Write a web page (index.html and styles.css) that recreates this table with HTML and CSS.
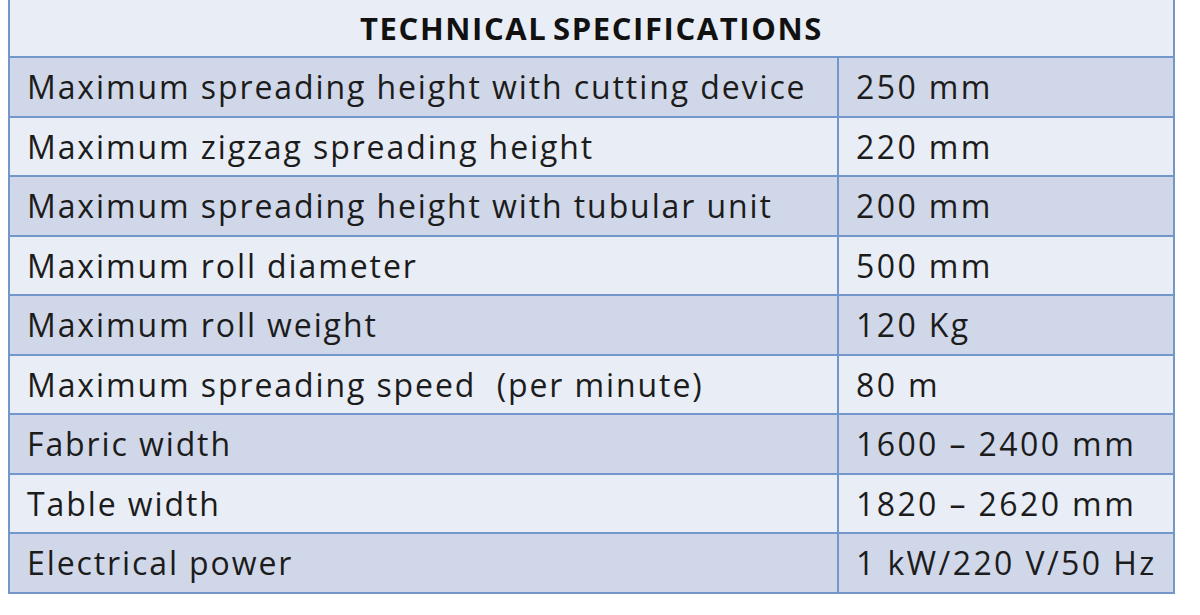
FILE: index.html
```html
<!DOCTYPE html>
<html>
<head>
<meta charset="utf-8">
<link rel="stylesheet" href="styles.css">
</head>
<body>
<table class="spec">
  <colgroup><col class="ck"><col class="cv"></colgroup>
  <tr class="head"><th colspan="2">TECHNICAL SPECIFICATIONS</th></tr>
  <tr class="dark"><td>Maximum spreading height with cutting device</td><td>250 mm</td></tr>
  <tr class="light"><td>Maximum zigzag spreading height</td><td>220 mm</td></tr>
  <tr class="dark"><td>Maximum spreading height with tubular unit</td><td>200 mm</td></tr>
  <tr class="light"><td>Maximum roll diameter</td><td>500 mm</td></tr>
  <tr class="dark"><td>Maximum roll weight</td><td>120 Kg</td></tr>
  <tr class="light"><td>Maximum spreading speed&nbsp; (per minute)</td><td>80 m</td></tr>
  <tr class="dark"><td>Fabric width</td><td>1600 – 2400 mm</td></tr>
  <tr class="light"><td>Table width</td><td>1820 – 2620 mm</td></tr>
  <tr class="dark"><td>Electrical power</td><td>1 kW/220 V/50 Hz</td></tr>
</table>
</body>
</html>
```
FILE: styles.css
```css
html, body {
  margin: 0;
  padding: 0;
  background: #ffffff;
}
body {
  padding-left: 8px;
  font-family: "Open Sans", Lato, sans-serif;
  color: #1c1c1c;
}
.spec {
  border-collapse: collapse;
  width: 1165px;
  table-layout: fixed;
}
.spec col.ck { width: 829px; }
.spec col.cv { width: 336px; }
.spec th, .spec td {
  border: 2px solid #7397cb;
  padding: 0 0 0 17px;
  text-align: left;
  white-space: nowrap;
  overflow: hidden;
}
.spec .head th {
  border-top: none;
  height: 56px;
  background: #e9edf5;
  text-align: center;
  padding: 0;
  font-weight: 700;
  font-size: 31px;
  letter-spacing: 1.6px;
  word-spacing: -4px;
  color: #111;
}
.spec tr.dark td { background: #d0d7e8; }
.spec tr.light td { background: #e9edf5; }
.spec td {
  height: 57.5px;
  font-size: 32px;
  letter-spacing: 1.9px;
}
.spec td + td {
  letter-spacing: 2.4px;
}
```
